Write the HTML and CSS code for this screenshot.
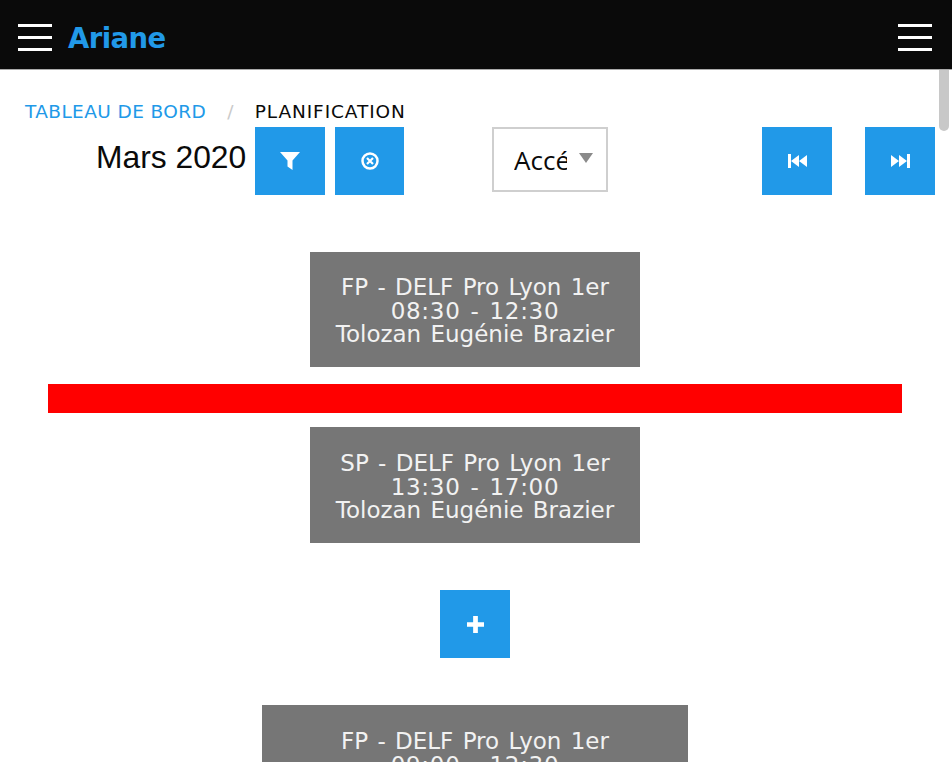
FILE: index.html
```html
<!DOCTYPE html>
<html lang="fr">
<head>
    <meta charset="UTF-8">
    <meta name="viewport" content="width=device-width, initial-scale=1.0">
    <title>Ariane - Planification</title>
    <link rel="stylesheet" href="styles.css">
</head>
<body>

    <!-- Top bar -->
    <header class="topbar">
        <div class="brand">
            <button class="burger" aria-label="Menu"><span></span><span></span><span></span></button>
            <span class="brand-name">Ariane</span>
        </div>
        <button class="burger" aria-label="Compte"><span></span><span></span><span></span></button>
    </header>

    <div class="scroll-thumb"></div>

    <main class="content">
        <!-- Breadcrumb -->
        <nav class="breadcrumb">
            <a href="#">Tableau de bord</a>
            <span class="separator">/</span>
            <span class="current">Planification</span>
        </nav>

        <!-- Toolbar -->
        <div class="toolbar">
            <h1 class="month">Mars 2020</h1>
            <button class="btn" aria-label="Filtrer">
                <svg width="20" height="18" viewBox="0 0 20 18"><path d="M0 0h20l-7.500 8.500V18l-5-3.500v-6z" fill="#fff"/></svg>
            </button>
            <button class="btn btn-narrow" aria-label="Effacer">
                <svg width="18" height="18" viewBox="0 0 18 18" fill="none" stroke="#fff"><circle cx="9" cy="9" r="7.500" stroke-width="2.500"/><path d="M6 6l6 6M12 6l-6 6" stroke-width="2.200"/></svg>
            </button>
            <div class="select-wrap">
                <select class="select">
                    <option>Accéder</option>
                </select>
            </div>
            <div class="pager">
                <button class="btn" aria-label="Précédent">
                    <svg width="19" height="14" viewBox="0 0 19 14" fill="#fff"><path d="M0 0h3v14H0zM11 1v12L3 7zM19 1v12l-8-6z"/></svg>
                </button>
                <button class="btn" aria-label="Suivant">
                    <svg width="19" height="14" viewBox="0 0 19 14" fill="#fff"><path d="M19 0h-3v14h3zM8 1v12l8-6zM0 1v12l8-6z"/></svg>
                </button>
            </div>
        </div>

        <!-- Sessions -->
        <section class="planning">
            <div class="session session-first">
                FP - DELF Pro Lyon 1er<br>
                <span class="time">08:30 - 12:30</span><br>
                Tolozan Eugénie Brazier
            </div>
            <div class="today-bar"></div>
            <div class="session">
                SP - DELF Pro Lyon 1er<br>
                <span class="time">13:30 - 17:00</span><br>
                Tolozan Eugénie Brazier
            </div>
            <button class="btn btn-add" aria-label="Ajouter">
                <svg width="17" height="17" viewBox="0 0 18 18"><path d="M6.500 0h5v6.500H18v5h-6.500V18h-5v-6.500H0v-5h6.500z" fill="#fff"/></svg>
            </button>
            <div class="session session-wide">
                FP - DELF Pro Lyon 1er<br>
                <span class="time">09:00 - 12:30</span><br>
                Tolozan Eugénie Brazier
            </div>
        </section>
    </main>

</body>
</html>
```

FILE: styles.css
```css
/* General Styles */
html, body {
    height: 762px;
    overflow: hidden;
}

body {
    margin: 0;
    padding: 0;
    background-color: white;
    font-family: "DejaVu Sans", sans-serif;
    color: #0a0a0a;
}

button {
    border: none;
    padding: 0;
    cursor: pointer;
}

/* Top bar */
.topbar {
    height: 69px;
    padding: 0 20px 0 18px;
    display: flex;
    align-items: center;
    justify-content: space-between;
    background-color: #0a0a0a;
    border-bottom: 1px solid #aaa;
}

.brand {
    display: flex;
    align-items: center;
    gap: 16px;
}

.brand-name {
    margin-top: 6px;
    font-size: 27.500px;
    font-weight: bold;
    letter-spacing: -0.600px;
    color: #2199e8;
}

.burger {
    width: 34px;
    height: 27px;
    margin-top: 5px;
    display: flex;
    flex-direction: column;
    justify-content: space-between;
    background: none;
}

.burger span {
    height: 3px;
    background-color: white;
}

.scroll-thumb {
    position: absolute;
    top: 70px;
    left: 939px;
    width: 10px;
    height: 61px;
    background-color: #c8c8c8;
    border-radius: 0 0 5px 5px;
}

/* Breadcrumb */
.content {
    padding: 26px 17px 0 0;
}

.breadcrumb {
    height: 31px;
    padding-left: 25px;
    display: flex;
    align-items: center;
    font-size: 18.500px;
    letter-spacing: 0.400px;
    text-transform: uppercase;
}

.breadcrumb a {
    color: #2199e8;
    text-decoration: none;
}

.separator {
    margin: 0 21px;
    color: #cacaca;
}

.current {
    letter-spacing: 0.900px;
}

/* Toolbar */
.toolbar {
    display: flex;
    align-items: flex-start;
    padding-left: 96px;
}

.month {
    margin: 12px 8.800px 0 0;
    font-family: "Liberation Sans", Arial, sans-serif;
    font-size: 31.800px;
    font-weight: normal;
    line-height: 37px;
}

.btn {
    width: 70px;
    height: 68px;
    display: flex;
    align-items: center;
    justify-content: center;
    background-color: #2199e8;
}

.btn-narrow {
    width: 69px;
    margin-left: 10px;
}

.select-wrap {
    position: relative;
    margin-left: 88px;
}

.select-wrap::after {
    content: "";
    position: absolute;
    top: 26px;
    right: 15px;
    border-style: solid;
    border-width: 10px 7px 0;
    border-color: #8a8a8a transparent transparent;
}

.select {
    display: block;
    width: 116px;
    height: 65px;
    padding: 0 39px 0 20px;
    appearance: none;
    background-color: white;
    border: 2px solid #cfcfcf;
    border-radius: 0;
    font-family: "Open Sans", sans-serif;
    font-size: 26px;
    color: #0a0a0a;
}

.pager {
    margin-left: auto;
    display: flex;
    gap: 33px;
}

/* Sessions */
.planning {
    display: flex;
    flex-direction: column;
    align-items: center;
    padding-left: 15px;
}

.session {
    width: 330px;
    height: 116px;
    box-sizing: border-box;
    padding-top: 25px;
    flex-shrink: 0;
    background-color: #767676;
    font-size: 23px;
    word-spacing: 2px;
    line-height: 23.600px;
    text-align: center;
    color: #f2f2f2;
}

.time {
    letter-spacing: 0.700px;
}

.session-first {
    height: 115px;
    padding-top: 24px;
    margin-top: 57px;
}

.session-wide {
    width: 426px;
    margin-top: 47px;
}

.today-bar {
    width: 854px;
    height: 29px;
    margin: 17px 0 14px;
    background-color: red;
}

.btn-add {
    flex-shrink: 0;
    margin-top: 47px;
}
```
